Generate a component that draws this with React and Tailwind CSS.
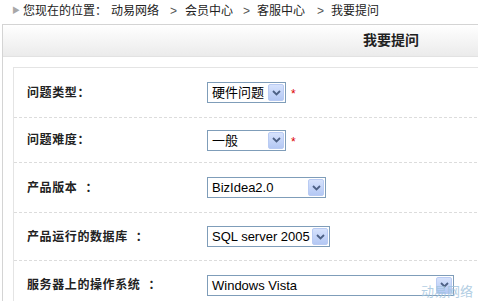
import React from "react";

const rows = [
  { label: "问题类型", sep: "", value: "硬件问题", width: "w-[79px]", required: true, h: "h-[50px]" },
  { label: "问题难度", sep: "", value: "一般", width: "w-[79px]", required: true, h: "h-[45px]" },
  { label: "产品版本", sep: "ml-[8px]", value: "BizIdea2.0", width: "w-[119px]", h: "h-[50px]" },
  { label: "产品运行的数据库", sep: "ml-[8px]", value: "SQL server 2005", width: "w-[123px]", h: "h-[48px]" },
  { label: "服务器上的操作系统", sep: "ml-[8px]", value: "Windows Vista", width: "w-[247px]", h: "h-[48px]" },
];

function Select({ value, width }) {
  return (
    <div className={`${width} h-[21px] border border-[#7f9db9] bg-white flex items-center justify-between pl-[4px] pr-[1px]`}>
      <span className="text-[13px] text-black leading-none whitespace-nowrap">{value}</span>
      <span className="w-[16px] h-[17px] rounded-[2px] border border-[#b9cbf3] bg-gradient-to-b from-[#d6e2fc] to-[#b4c8f4] flex items-center justify-center">
        <svg width="9" height="6" viewBox="0 0 9 6">
          <path d="M1 1 L4.5 4.5 L8 1" fill="none" stroke="#4d6185" strokeWidth="1.8" />
        </svg>
      </span>
    </div>
  );
}

export default function App() {
  return (
    <div
      className="relative w-[478px] h-[301px] overflow-hidden bg-white"
      style={{ fontFamily: '"Liberation Sans", "Noto Sans CJK SC", sans-serif' }}
    >
      <div className="h-[24px] flex items-center pl-[12px] pb-[3px] text-[12px] text-[#222]">
        <span className="text-[#a8a8a8] text-[8px] mr-[3px]">▶</span>
        <span>您现在的位置：</span>
        <span className="ml-[4px]">动易网络</span>
        <span className="ml-[11px] mr-[8px] text-[#555]">&gt;</span>
        <span>会员中心</span>
        <span className="ml-[10px] mr-[7px] text-[#555]">&gt;</span>
        <span>客服中心</span>
        <span className="ml-[12px] mr-[7px] text-[#555]">&gt;</span>
        <span>我要提问</span>
      </div>

      <div className="ml-[2px] border-l border-t border-[#d4d4d4] w-[520px]">
        <div className="h-[32px] bg-gradient-to-b from-white to-[#ebebeb] border-b border-[#e2e2e2] pl-[360px] flex items-center">
          <span className="text-[14px] font-bold text-[#222]">我要提问</span>
        </div>
        <div className="mt-[10px] ml-[10px] border-l border-t border-[#e4e4e4]">
          {rows.map((r, i) => (
            <div
              key={i}
              className={`${r.h} flex items-center pl-[13px] ${i < rows.length - 1 ? "border-b border-dashed border-[#dcdcdc]" : ""}`}
            >
              <div className="w-[180px] text-[12px] font-bold text-[#222] whitespace-nowrap tracking-[0.6px]">
                {r.label}
                <span className={r.sep}>：</span>
              </div>
              <Select value={r.value} width={r.width} />
              {r.required && <span className="ml-[5px] mt-[3px] text-[#d00] text-[12px]">*</span>}
            </div>
          ))}
        </div>
      </div>

      <div className="absolute right-[5px] bottom-[0px] text-[13px] text-[#9fc3dd] opacity-80">动易网络</div>
    </div>
  );
}
